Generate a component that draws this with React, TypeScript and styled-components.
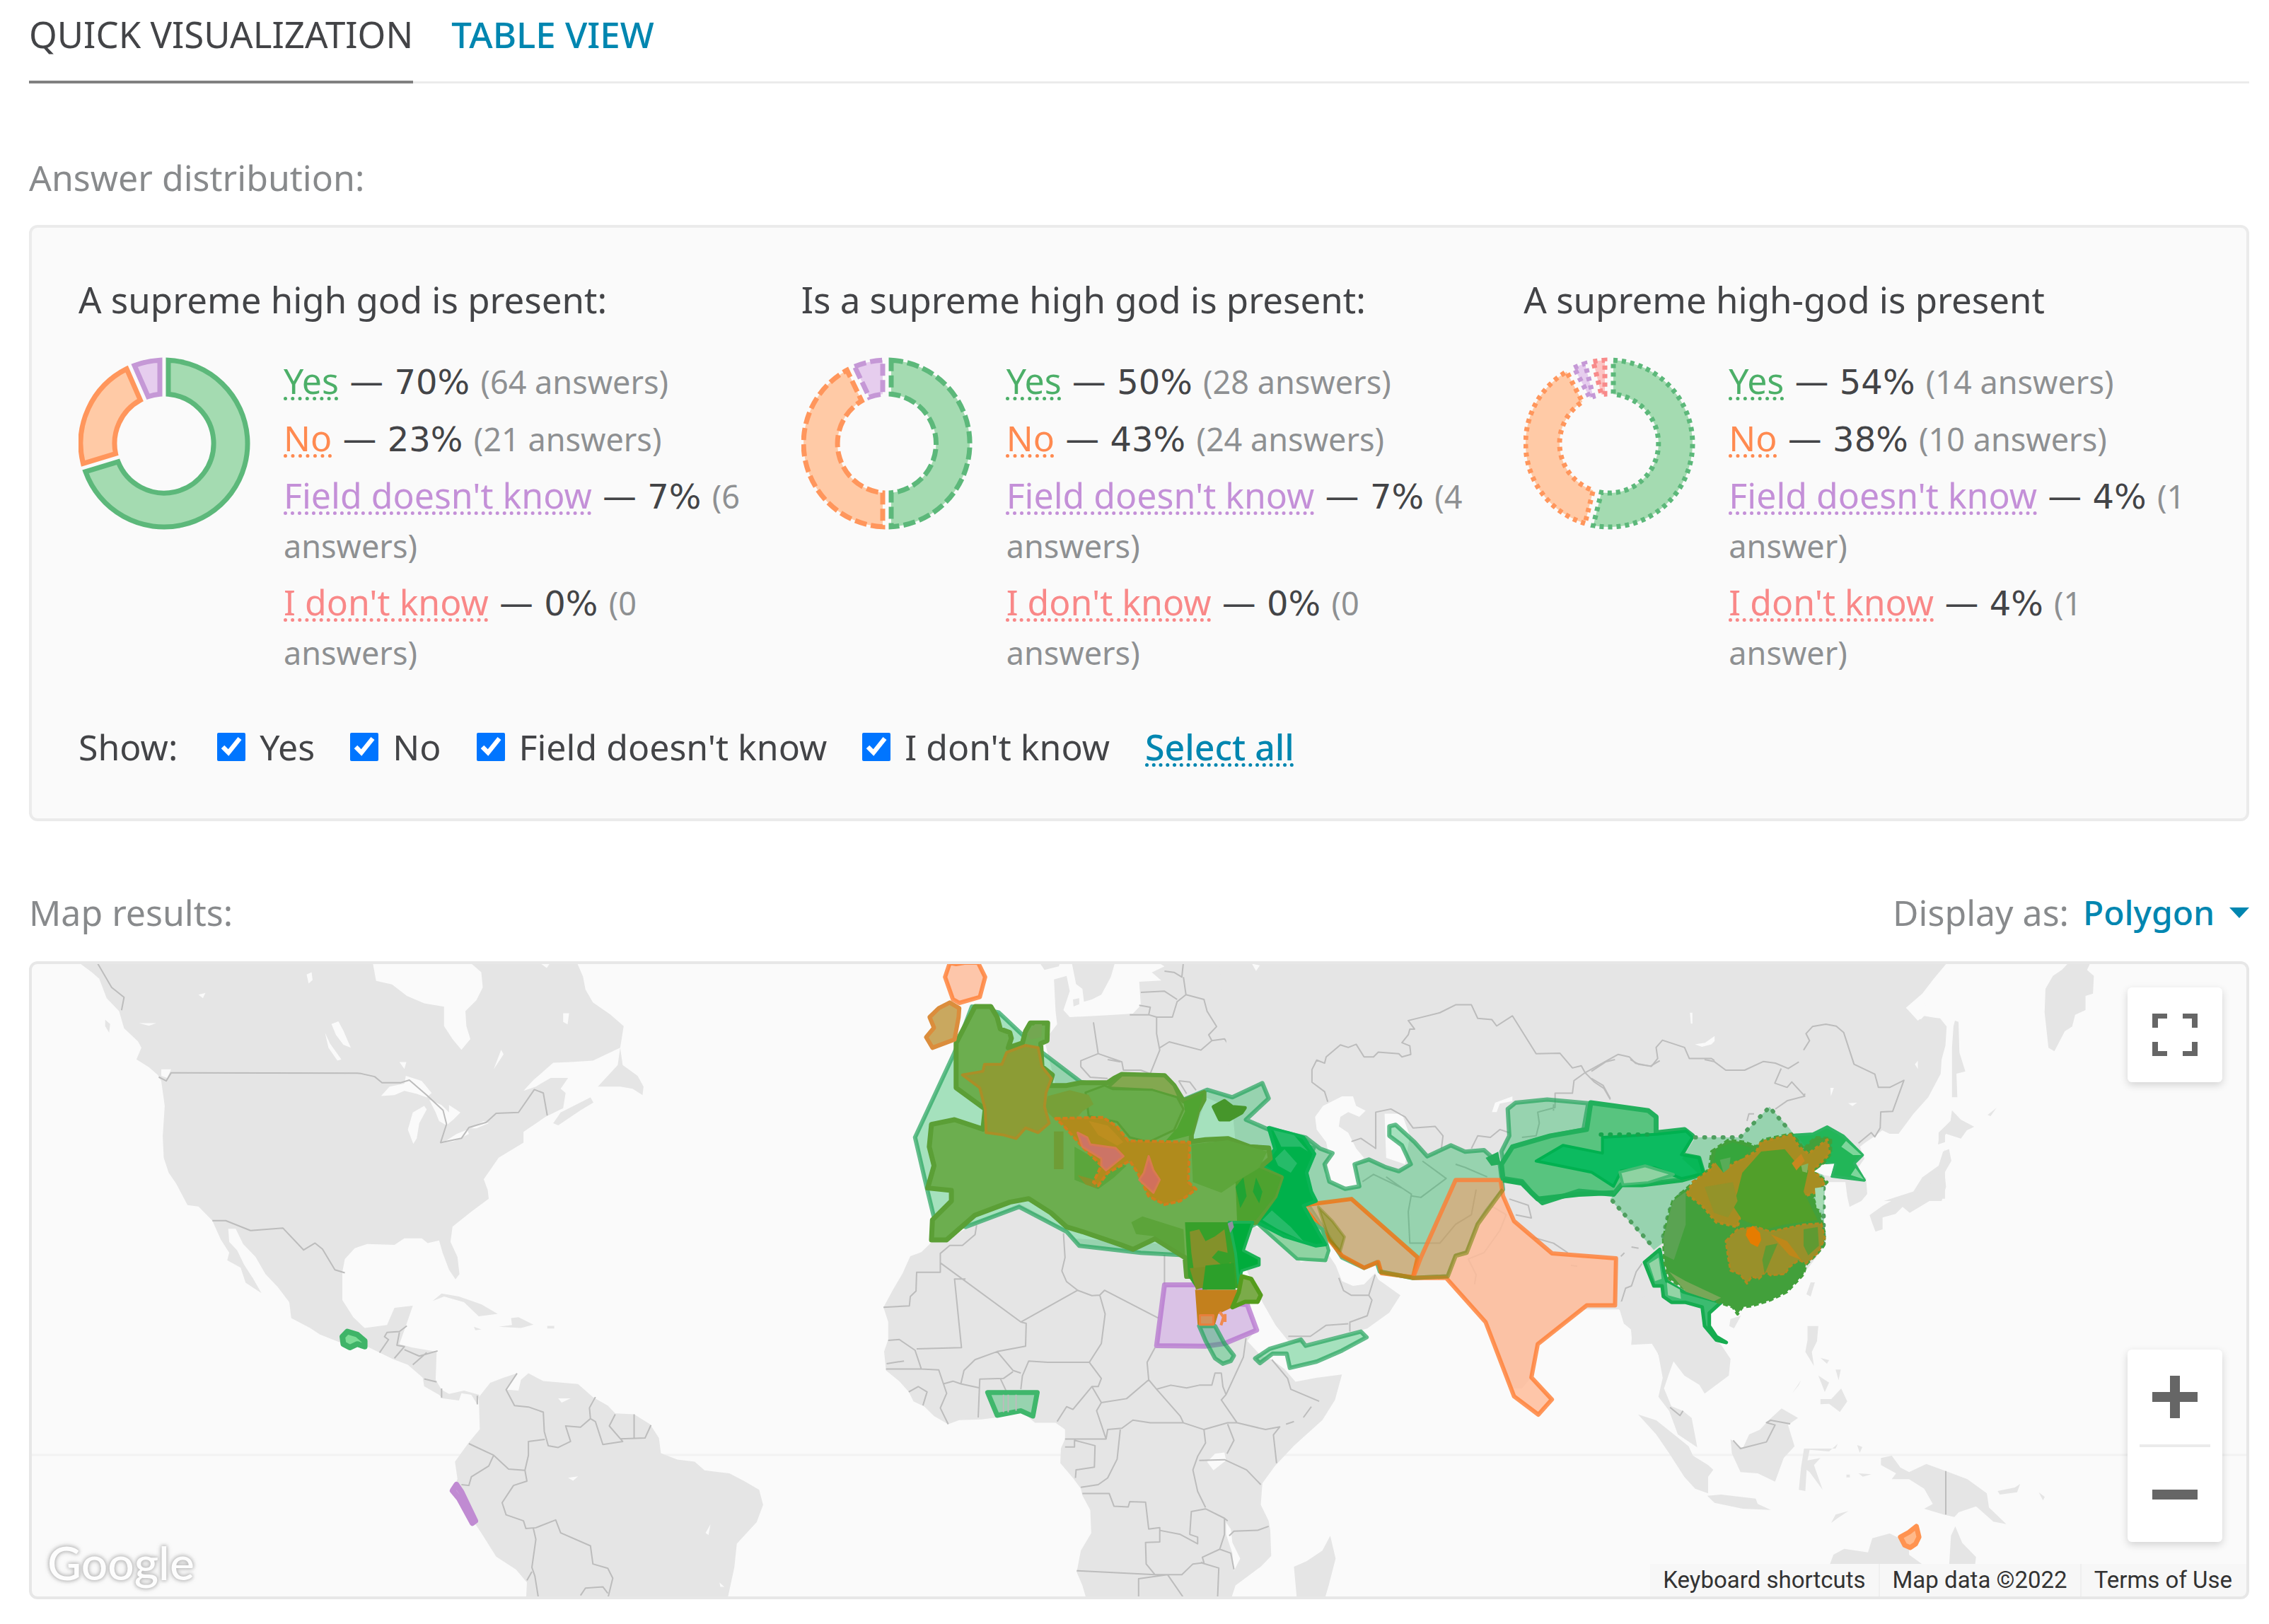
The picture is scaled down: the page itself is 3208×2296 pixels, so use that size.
import React, { useState } from "react";
import styled, { createGlobalStyle } from "styled-components";

const GlobalStyle = createGlobalStyle`
  *, *::before, *::after { box-sizing: border-box; }
  body {
    margin: 0;
    background: #fff;
    color: #434447;
    font-family: "Noto Sans", "Open Sans", sans-serif;
    font-size: 50px;
    line-height: 70px;
  }
`;

const Page = styled.main`
  padding: 0 28px 34px 41px;
`;

const Tabs = styled.nav`
  display: flex;
  gap: 54px;
  border-bottom: 3px solid #ebebeb;
`;

const Tab = styled.a<{ $active?: boolean }>`
  padding: 13px 0 31px;
  margin-bottom: -3px;
  font-size: 51px;
  text-decoration: none;
  font-weight: ${(p) => (p.$active ? 400 : 500)};
  color: ${(p) => (p.$active ? "#434447" : "#0086b0")};
  border-bottom: 4px solid ${(p) => (p.$active ? "#808080" : "transparent")};
`;

const SectionHead = styled.div<{ $above: number; $below: number }>`
  display: flex;
  justify-content: space-between;
  margin: ${(p) => p.$above}px 0 ${(p) => p.$below}px;
  color: #888a8c;
`;

const SectionTitle = styled.h2`
  margin: 0;
  font: inherit;
`;

const Panel = styled.section`
  border: 4px solid #ebebeb;
  border-radius: 12px;
  background: #fafafa;
  padding: 66px 0 66px 66px;
`;

const Charts = styled.div`
  display: grid;
  grid-template-columns: repeat(3, 1fr);
`;

const Chart = styled.article`
  padding-right: 66px;
`;

const ChartTitle = styled.h3`
  margin: 0 0 45px;
  font-size: 51px;
  font-weight: 400;
`;

const ChartBody = styled.div`
  display: flex;
  align-items: flex-start;
  gap: 46px;
`;

const Donut = styled.svg`
  flex: none;
  width: 244px;
  height: 244px;
  margin-top: 2px;
`;

const Legend = styled.ul`
  flex: 1;
  list-style: none;
  margin: 0;
  padding: 0;
  display: grid;
  gap: 11px;
`;

const DottedLink = styled.a<{ $color: string }>`
  color: ${(p) => p.$color};
  text-decoration: underline dotted 5px;
  text-underline-offset: 4px;
  text-decoration-skip-ink: none;
`;

const Share = styled.span`
  font-family: "DejaVu Sans", sans-serif;
  font-size: 48px;
  line-height: 1;
`;

const Count = styled.span`
  font-size: 45px;
  line-height: 1;
  color: #8e9092;
`;

const Filters = styled.div`
  display: flex;
  align-items: center;
  gap: 50px;
  margin-top: 65px;
`;

const FiltersTitle = styled.span`
  padding-right: 6px;
`;

const Option = styled.label`
  display: flex;
  align-items: center;
  gap: 20px;
`;

const Tick = styled.input`
  width: 40px;
  height: 40px;
  margin: 0;
  accent-color: #0075ff;
`;

const TextButton = styled.button`
  padding: 0;
  border: 0;
  background: none;
  font: inherit;
  font-weight: 500;
  color: #0086b0;
  text-decoration: underline dotted 5px;
  text-underline-offset: 4px;
  text-decoration-skip-ink: none;
`;

const Display = styled.div`
  display: flex;
  align-items: center;
  gap: 20px;
`;

const DisplaySelect = styled.select`
  appearance: none;
  border: 0;
  padding: 0;
  background: none;
  font: inherit;
  font-size: 48px;
  font-weight: 500;
  color: #0086b0;
`;

const Caret = styled.svg`
  width: 28px;
  height: 15px;
  fill: #0086b0;
`;

const MapFrame = styled.section`
  position: relative;
  height: 902px;
  border: 4px solid #e7e7e7;
  border-radius: 12px;
  background: #fafafa;
  overflow: hidden;
`;

const MapDrawing = styled.svg`
  display: block;
  width: 100%;
  height: 100%;

  path { vector-effect: non-scaling-stroke; stroke-linejoin: round; }
  .land { fill: #e5e5e5; }
  .sea { fill: #fafafa; }
  .border { fill: none; stroke: #bcbcbc; stroke-width: 2; }
`;

const Controls = styled.div`
  position: absolute;
  inset: 33px 34px 77px auto;
  display: flex;
  flex-direction: column;
  justify-content: space-between;
`;

const ControlCard = styled.div`
  width: 134px;
  background: #fff;
  border-radius: 6px;
  box-shadow: 0 4px 12px rgba(0, 0, 0, 0.16);
  display: flex;
  flex-direction: column;
  align-items: center;
`;

const ControlButton = styled.button`
  display: grid;
  place-items: center;
  width: 100%;
  height: 134px;
  padding: 0;
  border: 0;
  background: none;
  color: #666;

  svg { width: 64px; height: 64px; fill: currentColor; }
`;

const ControlRule = styled.hr`
  width: 100px;
  height: 4px;
  margin: 0;
  border: 0;
  background: #ebebeb;
`;

const Logo = styled.span`
  position: absolute;
  left: 22px;
  bottom: 12px;
  font: 500 66px/72px Lato, sans-serif;
  color: #fdfdfd;
  text-shadow: 0 0 5px #bbb, 0 0 5px #c4c4c4, 0 0 8px #ccc;
`;

const Attribution = styled.div`
  position: absolute;
  right: 0;
  bottom: 0;
  display: flex;
  font: 33px/46px Roboto, sans-serif;
  color: #333;
`;

const Credit = styled.span`
  padding: 0 18px;
  background: rgba(245, 245, 245, 0.75);
  border-left: 2px solid #efefef;
`;

const CreditButton = styled.button`
  padding: 0 18px;
  border: 0;
  background: rgba(245, 245, 245, 0.75);
  font: inherit;
  color: inherit;
`;

const CreditLink = styled.a`
  padding: 0 20px 0 18px;
  background: rgba(245, 245, 245, 0.75);
  border-left: 2px solid #efefef;
  color: inherit;
  text-decoration: none;
`;

const KINDS = [
  { label: "Yes", text: "#4caf68", stroke: "#5cb87a", fill: "#a4dbb1" },
  { label: "No", text: "#ff8a50", stroke: "#ff965c", fill: "#ffcaa6" },
  { label: "Field doesn't know", text: "#c490d8", stroke: "#c598d6", fill: "#e6cdee" },
  { label: "I don't know", text: "#f98888", stroke: "#f88a8a", fill: "#fcc4c4" },
];

const CHARTS = [
  { title: "A supreme high god is present:", dash: undefined, percents: [70, 23, 7, 0], counts: [64, 21, 6, 0] },
  { title: "Is a supreme high god is present:", dash: "17 6", percents: [50, 43, 7, 0], counts: [28, 24, 4, 0] },
  { title: "A supreme high-god is present", dash: "6 6", percents: [54, 38, 4, 4], counts: [14, 10, 1, 1] },
];

const OUTER = 118;
const INNER = 70;
const GAP = 6;

function slicePath(from: number, to: number) {
  const a = from * 2 * Math.PI;
  const b = to * 2 * Math.PI;
  const at = (r: number, angle: number) =>
    `${(121 + r * Math.sin(angle)).toFixed(1)} ${(122 - r * Math.cos(angle)).toFixed(1)}`;
  const o = Math.asin(GAP / OUTER);
  const i = Math.asin(GAP / INNER);
  const large = to - from > 0.5 ? 1 : 0;
  return `M${at(OUTER, a + o)} A${OUTER} ${OUTER} 0 ${large} 1 ${at(OUTER, b - o)} L${at(INNER, b - i)} A${INNER} ${INNER} 0 ${large} 0 ${at(INNER, a + i)}Z`;
}

function DonutChart({ counts, dash }: { counts: number[]; dash?: string }) {
  const total = counts.reduce((sum, n) => sum + n, 0);
  let start = 0;
  return (
    <Donut viewBox="0 0 244 244" aria-hidden="true">
      {counts.map((n, k) => {
        const from = start;
        start += n / total;
        return n ? (
          <path
            key={k}
            d={slicePath(from, start)}
            fill={KINDS[k].fill}
            stroke={KINDS[k].stroke}
            strokeWidth={7}
            strokeDasharray={dash}
          />
        ) : null;
      })}
    </Donut>
  );
}

/* The map is drawn in sheets; each sheet has its own grid laid on the world. */
const SHEET = {
  america: "translate(0 1340) scale(.7015 .6097)",
  europe: "translate(1200 1340) scale(.4464 .3333)",
  africa: "translate(1200 1700) scale(.4464 .3801)",
  asia: "translate(1750 1340) scale(.4464)",
  china: "translate(2250 1500) scale(.3333)",
  islands: "translate(2250 1850) scale(.611 .3333)",
  pacific: "translate(2550 1200) scale(.4196 .3333)",
};

const GREEN = { fill: "rgba(0,176,70,.34)", stroke: "rgba(40,165,95,.72)", strokeWidth: 6 };
const ORANGE = { fill: "rgba(255,150,95,.52)", stroke: "rgba(255,125,50,.8)", strokeWidth: 6 };
const PURPLE = { fill: "rgba(205,150,230,.45)", stroke: "rgba(180,115,205,.75)", strokeWidth: 7 };

function BaseMap() {
  return (
    <>
      <path d="M0 2059H3208" stroke="#f2f2f2" strokeWidth={3} />
      <g transform={SHEET.america}>
        <path className="land" d="M150 30L185 60 200 75 215 120 240 150 250 190 278 220 285 235 275 262 300 280 318 298 325 312 332 370 328 440 330 490 340 525 355 550 378 600 400 603 428 636 445 680 462 710 458 728 485 745 495 780 527 804 510 770 492 738 478 705 462 685 460 655 475 655 490 690 515 720 535 760 560 790 583 825 587 862 625 885 645 900 700 925 740 928 765 942 792 957 822 970 852 1000 855 1020 885 1040 892 1048 925 1053 930 1036 950 1040 962 1062 966 1040 935 1030 905 1038 890 1028 878 1005 880 940 830 930 805 922 818 880 832 833 795 838 780 878 735 885 712 860 690 820 690 755 695 725 715 700 740 690 795 692 815 677 850 677 862 688 885 682 892 710 905 750 918 772 926 760 922 720 908 685 912 650 950 615 985 585 983 565 975 540 1005 490 1055 455 1055 430 1100 395 1135 375 1140 340 1130 330 1145 305 1110 305 1080 325 1055 335 1075 310 1115 270 1150 268 1195 265 1250 235 1257 185 1230 158 1195 130 1180 100 1175 70 1160 30Z" />
        <path className="land" d="M1115 410L1130 385 1190 350 1196 362 1170 380 1125 415ZM1250 235L1245 275 1225 300 1205 325 1250 325 1275 330 1295 345 1297 325 1285 300 1255 275ZM872 822L890 805 925 812 970 830 1003 852 965 858 935 825 895 812ZM1030 862L1045 860 1075 877 1050 885 1005 882 1032 878ZM955 882L970 888 958 890ZM1103 880h14v6h-14ZM212 170L222 180 220 200 212 185Z" />
        <path className="sea" d="M750 30L758 80 790 88 820 115 855 132 895 140 895 185 912 215 930 240 948 215 940 185 938 150 960 125 973 95 970 60 940 30ZM768 347L785 325 815 318 818 300 850 312 870 340 860 350 840 342 815 335 795 345ZM833 458L822 425 832 385 855 370 860 378 845 410 840 445ZM865 355L890 368 905 385 905 368 928 385 915 400 900 415 885 405 878 385ZM893 455L920 435 942 425 945 435 915 452ZM950 422L975 405 985 410 960 422ZM668 180L682 174 692 195 707 235 692 228 677 205ZM655 200L665 225 688 262 680 265 662 235ZM805 268h14l-4 16ZM1135 155h12l-3 26-9-6ZM618 65l10-5 2 18-8 8ZM400 112l14-4-5 12ZM280 178l35 0-15 6ZM1010 240l5 10-20 35ZM1085 36l25 0-8 14ZM178 55l10 15-2 30-8-20ZM325 285l20 0-8 20-12-5Z" />
        <path className="border" d="M195 36L225 95 250 118 245 148M320 303L335 312 345 293 720 294 728 295 755 302 770 316 808 316 825 310 860 345 893 380 900 412 888 455 930 445 945 420 980 408 1000 387 1045 385 1077 332 1095 340 1103 392M428 636L455 636 505 659 570 653 612 704 635 688 650 702 675 750 695 757M820 880L805 893 780 895 775 905 783 912 765 942M805 895L800 925 815 928 795 955M815 935L845 950 882 938M832 970L860 942M855 1003L880 1010M890 1025v22M962 1042v20" />
        <path className="land" d="M965 1045L988 1012 1015 1000 1042 990 1022 1028 1045 1030 1050 1005 1065 990 1095 1008 1165 1015 1195 1045 1225 1065 1240 1083 1278 1085 1310 1108 1328 1140 1332 1175 1365 1190 1400 1195 1420 1215 1470 1222 1500 1240 1530 1260 1538 1295 1525 1335 1485 1385 1480 1440 1465 1520H1060L1062 1475 1040 1445 1000 1415 970 1360 935 1300 915 1255 922 1235 917 1195 945 1150 967 1120Z" />
        <path className="sea" d="M1125 1048l25 0-18 10ZM1145 1232l20-3-10 10ZM1422 1360l10-20-4 25ZM1450 1475l10 10-8 0Z" />
        <path className="border" d="M1042 990L1020 1028 1037 1065 1065 1068 1095 1080 1097 1125 1105 1158 1125 1162 1150 1148 1140 1112 1170 1115 1190 1095 1188 1070 1200 1045M1190 1095L1200 1102 1215 1155 1255 1148 1228 1112 1240 1085M1250 1142L1300 1140 1312 1110M1278 1085v55M945 1153L995 1180 1025 1212 1058 1215 1065 1180 1065 1148 1098 1143M995 1180L985 1205 950 1230 945 1250 930 1248M1058 1215L1062 1240 1035 1250 1012 1290 1020 1318 1055 1332 1060 1350 1080 1348 1120 1330 1130 1360 1190 1390 1195 1432 1225 1442 1235 1465 1225 1512M1075 1350L1080 1375 1072 1440 1078 1460 1085 1510M1062 1470L1072 1450M1170 1505L1180 1488 1215 1485 1225 1500" />
      </g>
      <g transform={SHEET.africa}>
        <path className="land" d="M265 150L230 190 195 205 170 270 140 330 110 395 125 450 125 515 112 560 118 630 160 670 190 710 205 745 240 765 270 800 315 830 350 815 420 812 470 805 545 780 590 825 655 825 685 850 685 885 672 920 670 975 710 1030 735 1070 740 1095 765 1150 768 1235 735 1300 722 1380 740 1430 755 1490H1208L1225 1430 1305 1360 1338 1320 1335 1225 1330 1190 1305 1130 1310 1050 1350 985 1410 910 1500 815 1540 740 1562 645 1480 658 1415 672 1380 625 1340 590 1305 575 1262 520 1290 480 1255 390 1240 250 1240 190 1000 160 720 140 620 60 540 10 400 80 320 140ZM1525 1245L1542 1330 1520 1430 1505 1490H1420L1410 1360 1450 1340 1500 1300Z" />
        <path className="sea" d="M1160 940L1190 935 1195 965 1155 1002 1135 970ZM1195 1195L1210 1220 1215 1270 1240 1330 1220 1375 1215 1310 1195 1240Z" />
        <path className="border" d="M405 90L400 125 360 165 320 165 290 195 290 265 215 265 213 335 195 355 192 390 110 395M290 230L545 450 725 332 690 300 675 260 685 210 680 120M545 450L562 455 560 540 470 560 400 590 365 630 355 680 330 670 300 680 285 628 230 625 210 555 160 515 125 518M370 290L335 290 357 545 215 550M725 332L770 352 795 350 810 332 980 435M1000 200V310M795 350L812 420 800 530 762 600 690 600 630 600 570 595 550 650 545 700M470 560L520 630 545 640M520 635L490 660 415 662 410 805M480 660L500 710M355 680L415 695M300 680L310 715 290 770 315 830M120 605L175 595M118 625L230 625M190 710L220 690 248 710 235 760M762 600L800 660 790 690 770 690 710 775 690 765 660 820M770 690L800 750 785 780 815 885 685 885M800 750L880 735 950 665 945 600 970 545M950 665L975 700 1050 800 1060 825 955 825 900 815 865 845 820 850 815 885M975 700L1020 685 1070 695 1110 685 1150 685 1160 640 1180 640 1185 690 1195 720M1258 510L1250 580 1195 720 1180 740 1230 825 1200 825 1125 850 1060 825M1340 590L1390 660 1400 700 1490 745M1465 765L1440 805M1410 820L1385 830M1230 825L1320 850 1365 840 1345 870 1355 975M1200 830L1220 890 1198 940M1125 850L1130 900 1105 950 1090 1000 1105 1080 1130 1140M1110 965L1190 962 1260 1000 1305 1055M685 915H715V890L780 910 778 990 720 1000 718 1030M860 850L850 960 820 1030 790 1055 735 1065M740 1088L825 1088 840 1135 885 1138 890 1118 940 1120 950 1220 985 1215 985 1268 940 1270 942 1350 970 1390 722 1375M985 1225L1050 1240 1105 1275 1105 1250 1080 1240 1085 1155 1130 1145 1190 1180 1200 1190M1190 1180L1190 1240 1175 1295 1120 1325 1125 1345 1090 1350 1055 1390 970 1390M1205 1245L1220 1228 1295 1225 1330 1210M1175 1295L1210 1310 1220 1370M1115 1345L1172 1365 1168 1480M918 1480V1405L1010 1390 1060 1475" />
      </g>
      <g transform={SHEET.europe}>
        <path className="land" d="M660 330L655 275 650 140 690 125 700 190 680 270 700 300 780 295 840 290 900 285 925 250 920 150 990 145 960 110 1000 85 970 60H1580V900L1500 840 1400 780 1300 780 1200 740 1130 830H700L620 400ZM600 60L620 100 665 85 672 60ZM705 60L720 160 740 180 745 235 770 225 800 205 830 130 845 60ZM710 225l20-5 0 25-18 10Z" />
        <path className="sea" d="M1085 830L1120 690 1130 640 1200 680 1260 720 1340 800 1340 840 1280 840 1190 810ZM1280 75l15 0 8 15-15 8ZM1480 720L1500 690 1568 640V870L1520 840 1490 800Z" />
        <path className="border" d="M1000 105L1030 110 1055 130 1060 66M1060 130L1068 205 1125 225 1135 275 1165 340 1140 375 1150 400 1190 392 1230 470 1290 480 1325 515 1320 590M1068 205L1040 235 1025 300 975 300 975 370 985 440 955 540 925 525 870 525 865 490 790 455 735 485 735 510 765 555 820 560M925 195L1000 190 1040 225M920 250L955 258 950 290 975 300M890 290H950M775 322L790 455M985 430L1015 405 1115 440 1150 400M1045 570L1080 575 1100 610M1568 415L1520 465 1510 495 1475 490 1465 555 1500 600 1525 660M820 480L860 490M1045 570L1070 625" />
      </g>
      <g transform={SHEET.asia}>
        <path className="land" d="M-60 40H1580V1130L1490 1140 1480 1200 1520 1290 1480 1300 1420 1320 1390 1310 1340 1320 1320 1250 1250 1262 1245 1210 1215 1150 1200 1140H1105L950 1262 930 1365 900 1400 870 1400 790 1190 660 1050H550L450 1040 440 1005 400 1020 335 990 300 950 0 700Z" />
        <path className="land" d="M20 880L80 895 150 950 200 1000 290 980 310 1010 330 1060 365 1075 400 1070 435 1035 445 1055 515 1105 480 1160 410 1210 355 1225 210 1260 160 1250 120 1200 80 1130 20 1010Z" />
        <path className="sea" d="M245 540L270 505 330 475 365 475 375 505 405 520 385 540 350 525 325 540 320 570 350 590 375 640 400 670 370 690 385 760 340 770 290 745 275 720 290 670 280 620 250 580ZM805 525L815 495 870 475 870 490 830 498 820 525ZM1448 310L1480 305 1530 270 1560 210 1568 190V220L1540 270 1500 310 1470 318ZM465 530L520 530 545 600 530 690 470 670ZM45 55l25 5-12 18ZM1432 210h8v35h-5Z" />
        <path className="border" d="M285 492L275 460 235 430 235 390 250 360 275 370 280 350 325 312 350 320 375 310 400 350 430 350 445 335 510 340 520 350 548 342 545 315 520 305 540 280 545 262 560 262 540 235 640 210 690 185 740 185 760 228 805 232 820 252 870 220 945 340 1020 338 1060 385 1088 378 1100 400 1065 425 1060 465 1005 465V510L950 525 955 560 945 600 900 605M1100 400L1205 342 1240 350 1260 370 1310 380 1330 355 1325 320 1345 297 1415 320 1430 355 1500 355 1568 400M1100 400L1130 430 1160 450 1180 485M360 618L390 608 430 635 437 640 437 525 485 515 530 540 555 575 625 570 650 600 645 640M1000 500V520M740 640L760 600 800 605 830 580 860 590M395 745L430 722 520 765 550 785 540 840 545 940 640 940 690 880 740 850 755 770M470 730L520 765M585 680L660 735 580 795 550 790M690 690L720 700 790 730M800 820L850 850 830 900 780 970 730 990 755 1040 750 1070M860 800L920 820 930 860 880 850M930 920L1000 940 1045 970M1130 990L1120 1040 1135 1060 1130 1130M1055 1010L1120 1020 1190 1030M1130 1000L1190 1000M1290 955L1250 1040 1220 1100 1210 1150M320 1050L335 1090 360 1105 415 1105 435 1040M415 1105L425 1120 410 1170 355 1190 355 1220M160 1235L230 1235 280 1200 350 1195" />
      </g>
      <g transform={SHEET.pacific}>
        <path className="land" d="M-300 480H490L440 555 400 620 345 680 385 735 405 715 440 722 460 725 482 760 478 840 465 900 462 960 420 1060 370 1130 320 1215 290 1215 265 1200 240 1225 205 1255 190 1270 205 1320 150 1420H-300ZM900 480L870 520 840 545 815 600 812 700 825 850 845 865 880 780 905 760 915 710 950 690 950 630 975 620 978 545 955 520 970 480ZM510 735L505 760 500 850 500 1060 518 1060 515 960 545 950 525 870 522 740ZM500 1115L495 1160 455 1210 455 1260 480 1215 530 1235 550 1200 575 1185 530 1155ZM470 1290L490 1280 498 1330 475 1380 480 1440 465 1500H270L370 1460 400 1400 455 1350ZM620 1135L650 1105 630 1140Z" />
        <path className="sea" d="M345 680l60-20 20 30-30 40ZM150 1085l30-2-15 14ZM90 1020l12 0-10 35ZM375 920l10-15 0 35Z" />
        <path className="border" d="M0 860L20 820 8 790 30 760 75 750 110 758 135 785 170 920 240 962 252 1018 290 1018 338 988 300 1120 260 1122 258 1190 240 1228 228 1210 185 1255M0 1055L5 1045" />
      </g>
      <g transform={SHEET.china}>
        <path className="land" d="M-60 300H1000V500L985 600 990 790 900 910 800 1000 640 1050 500 1030 400 1060H-60ZM1075 500H1165L1170 570 1145 600 1095 625 1085 580ZM1500 300L1475 330 1470 360 1500 350ZM1500 380L1490 420 1470 470 1475 510 1410 540 1365 580 1290 590 1235 620 1180 660 1190 690 1205 730 1235 720 1235 670 1290 655 1320 625 1350 650 1400 620 1450 590 1500 590ZM930 945L948 945 930 1005 912 995ZM590 1100L635 1085 605 1140 585 1130Z" />
        <path className="border" d="M0 50L60 10 100 0M0 80L50 110 80 165M165 0L200 20 250 28 290 5M480 0L520 8 570 45 650 45 730 8 780 15 835 38 880 10M805 38L778 100 830 118 850 95 905 155 830 175 780 210M660 260L668 230 690 230M340 1070L345 1095 365 1110 368 1160 400 1140 450 1150 495 1240 490 1255 430 1255 400 1285 415 1340M495 1250H550V1310L500 1345M345 1080L260 1120 265 1160 290 1200 285 1245 310 1290 320 1345M215 865L190 900 170 960 145 970 120 1050M125 835L140 820M170 795L200 800" />
      </g>
      <g transform={SHEET.islands}>
        <path className="land" d="M60 -20L75 70 95 100 92 160 140 155 155 200 165 300 155 380 180 440 200 540 245 595 232 470 212 440 185 420 168 345 180 280 190 230 215 290 250 330 262 367 318 290 322 220 300 160 262 100 265 20 280 -100ZM108 455L150 480 225 590 235 630 270 670 282 690 270 720 270 790 240 770 215 720 180 620 150 540ZM268 800L300 795 380 812 385 835 415 860 350 855 285 830ZM322 560L350 600 365 540 390 520 410 480 440 430 478 470 455 500 470 590 445 640 425 740 385 705 345 700 325 620ZM492 600L565 600 570 580 550 612 505 605 500 650 530 640 515 670 535 775 505 700 498 690 495 780 480 775 485 680ZM500 80H525L522 145 510 190 515 250 495 190 500 140ZM530 215L550 225 545 240ZM565 265h12l-5 45ZM525 290L550 320 540 360ZM530 390L555 390 578 345 592 400 575 445 550 410 530 412ZM485 310L465 365 480 330ZM670 640L695 630 715 680 735 700 775 665 820 695 870 730 915 790 920 850 960 920 930 910 890 845 850 870 840 890 815 880 770 855 790 835 770 770 735 730 695 730 705 705 670 670ZM940 780L980 765 992 750 985 785 945 795ZM1035 785l14 20-4 15ZM615 585l12 8-6 25ZM590 710h8v12h-8ZM618 705l30 4-20 10ZM555 915L565 880 595 865 570 895ZM485 890l10 15M445 870l8 8ZM552 1090L560 1050 585 1025 640 1040 650 980 690 960 735 1000 735 1050 765 1090ZM828 1090L832 970 842 930 858 1000 890 1060 888 1090Z" />
        <path className="border" d="M328 565L345 600 405 572 425 500 405 490 415 480 460 495M820 695V880M182 425L205 460 212 440" />
      </g>
    </>
  );
}

function Overlays() {
  return (
    <>
      <g transform={SHEET.america}>
        <path d="M690 905L700 893 720 900 735 915 735 928 720 922 705 930 692 922Z" fill="#7ddc96" stroke="#3fb468" strokeWidth={8} />
        <path d="M912 1262L920 1248 930 1265 958 1332 952 1337 925 1280Z" fill="#c99bda" stroke="#c08bd2" strokeWidth={8} />
      </g>
      <g transform={SHEET.europe}>
        <path {...GREEN} d="M390 255L475 280 550 375 612 450 735 575 1060 650 1135 608 1215 640 1310 580 1330 645 1258 735 1335 780 1400 860V1100L1270 1190 1240 1290 1060 1310 925 1300 730 1270 690 1210 540 1105 370 1190 270 1150 250 1040 210 810 335 450Z" />
        <path {...ORANGE} d="M320 70L340 75 380 66 410 70 432 130 415 215 350 240 330 225 305 130Z" />
      </g>
      <g transform={SHEET.africa}>
        <path {...PURPLE} d="M1000 312H1100L1180 380 1262 385 1292 480 1190 530 1130 540 975 538Z" />
        <path {...GREEN} d="M1110 465H1160L1190 530 1220 575 1210 595 1185 605 1160 585 1130 520Z" />
        <path {...GREEN} d="M440 712H597L583 800 545 780 470 797Z" stroke="#3fb76c" strokeWidth={7} />
        <path className="border" d="M490 720v65M505 720v65M530 720v60" />
      </g>
      <g transform={SHEET.asia}>
        <path {...GREEN} d="M55 1305L100 1275 200 1245 215 1265 390 1220 408 1238 330 1280 250 1315 165 1335 155 1290 110 1290 70 1320Z" />
        <path {...GREEN} d="M100 575L150 590 215 605 260 640 300 655 275 690 290 745 340 768 385 760 370 690 415 675 470 700 510 712 548 690 520 630 480 600 480 570 500 565 560 620 600 665 675 630 720 650 780 645 830 690 840 770 790 835 760 880 725 970 690 980 665 1045 555 1050 450 1030 440 1000 400 1018 330 985 220 815 215 700 240 640Z" />
        <path {...ORANGE} d="M205 820L360 800 570 985 555 1048 455 1035 445 1000 400 1018 330 980 290 930Z" stroke="rgba(240,115,15,.8)" />
        <path fill="rgba(255,250,248,.65)" d="M840 770L875 870 995 972 1198 988 1195 1137H1105L950 1260 930 1365 995 1435 952 1483 875 1425 785 1190 665 1050 690 980 725 970 760 880Z" />
        <path {...ORANGE} d="M690 740H832L840 790 875 870 995 972 1198 988 1195 1137H1105L950 1260 930 1365 995 1435 952 1483 875 1425 785 1190 660 1050H555L580 985Z" />
        <path d="M255 825L300 870 338 920 325 965 290 930Z" fill="rgba(120,135,10,.45)" stroke="rgba(120,130,10,.4)" strokeWidth={4} />
        <path d="M840 770L760 880 725 970 690 980 665 1045 555 1050 450 1030" fill="none" stroke="rgba(140,140,30,.6)" strokeWidth={6} />
      </g>
      <g transform={SHEET.europe}>
        <path d="M1290 1170L1420 1325 1510 1332 1520 1290 1500 1200 1400 1100Z" fill="#8fd3a2" stroke="#4cb877" strokeWidth={5} />
        <path d="M1310 930L1350 860 1330 770 1390 790 1440 810 1475 880 1450 960 1465 1040 1480 1080 1440 1100 1510 1265 1480 1270 1380 1230 1285 1165 1350 1060 1370 980Z" fill="#00b14b" stroke="#0ab355" strokeWidth={5} />
        <path d="M1345 780L1410 800 1455 870 1430 850 1370 850ZM1340 1120L1400 1190 1440 1250 1360 1200 1310 1160ZM1350 900L1380 860 1420 920 1400 960 1360 930Z" fill="#26bb69" />
        <path d="M400 255H450L470 300 480 350 510 365 515 390 505 430 550 410 560 360 575 325 630 325 628 400 608 412 612 510 645 545 635 590 690 590 735 578H820L840 560 865 543 1000 548 1030 590 1060 655 1125 620 1125 650 1105 700 1085 800V828L1130 820 1200 815 1270 850 1330 855 1335 900 1300 940 1370 980 1350 1060 1290 1170 1240 1180 1230 1400H1070L1065 1320 970 1240 900 1285 860 1265 740 1210 690 1190 640 1130 570 1070 510 1085 400 1140 310 1245H262L265 1160 325 1080V1035L250 1025 270 930 255 850 262 755 335 735 425 775 432 690 340 600V410Z" fill="#6cae4f" stroke="#5b9f36" strokeWidth={7} />
        <path d="M820 600L865 545 1000 550 1030 590 1050 650 960 610Z" fill="#83a850" stroke="#5f9e38" strokeWidth={4} />
        <path d="M835 605L960 608 1040 640 1060 690 1030 780 950 830 890 810 850 745 760 720 750 620 810 590Z" fill="#68ac4a" stroke="#599f36" strokeWidth={3} />
        <path d="M1060 660L1125 620 1085 800 1000 830 1040 770 1065 700Z" fill="#50a431" />
        <path d="M630 635L700 610 760 630 775 670 740 700 720 730 650 730 620 690Z" fill="#77a038" />
        <path d="M360 545L425 530 430 500 485 500 500 450 560 420 600 430 612 510 642 560 625 620 620 680 635 750 600 790 560 770 530 815 490 800 435 790 432 690 415 600Z" fill="#8c9c35" stroke="#ab8e27" strokeWidth={4} />
        <path d="M650 785H680V945H650Z" fill="#6f9d36" />
        <path d="M715 850L780 900 880 930 840 980 790 1030 715 990Z" fill="#5ba63c" />
        <path d="M725 970L780 990 785 1025 750 1010Z" fill="#86932b" />
        <path d="M655 730L805 725 850 765 885 825 1080 830 1075 1000 1100 1030 1050 1080 1000 1095 950 1060 915 960 890 910 820 960 790 1015 775 1000 800 930 740 850 680 760Z" fill="#b08b1c" stroke="#cf7f1c" strokeWidth={4} strokeDasharray="7 3" />
        <path d="M760 740L820 760 870 830 850 845 790 800Z" fill="#bd8e1f" />
        <path d="M725 790L755 810 765 840 845 855 870 890 815 950 800 930 800 900 740 850Z" fill="#cc7466" stroke="#d97a50" strokeWidth={3} />
        <path d="M950 890L965 950 985 990 965 1045 920 990 935 960Z" fill="#d1705c" stroke="#d97a50" strokeWidth={3} />
        <path d="M1085 840L1200 822 1325 870 1300 940 1230 1000 1180 1045 1090 1000Z" fill="#5da63b" />
        <path d="M1225 1000L1300 940 1370 980 1350 1060 1290 1160 1230 1170Z" fill="#4ea22f" />
        <path d="M895 1170L930 1145 1060 1200 1065 1310 970 1230 910 1220Z" fill="#5ca43a" />
        <path d="M1155 680L1190 655 1215 680 1255 685 1245 705 1205 735 1175 735Z" fill="#46962b" stroke="#46962b" strokeWidth={5} />
        <path d="M285 262L320 238 350 262 348 300 335 395 265 430 245 385 270 345 256 300Z" fill="#c9a85f" stroke="#db8d3c" strokeWidth={6} />
        <path d="M590 330L612 330 610 385 575 395 565 370Z" fill="#73a751" />
        <path d="M1065 1170H1215L1235 1450H1100L1075 1400Z" fill="#37a02a" />
        <path d="M1080 1210L1110 1200 1130 1250 1160 1230 1190 1200 1200 1300 1170 1290 1150 1320 1180 1350 1130 1380 1120 1450 1100 1440 1085 1300ZM1150 1390L1210 1340 1215 1400 1190 1440Z" fill="#83912a" />
        <path d="M1225 1020L1250 980 1260 1060 1240 1110ZM1290 980L1310 1040 1300 1090 1280 1040Z" fill="#20a433" />
        <path d="M1205 1170L1280 1170 1250 1290 1300 1325 1300 1352 1245 1375 1235 1430 1225 1300Z" fill="#00ac3c" stroke="#1cb255" strokeWidth={4} />
        <path d="M1200 1175l15-10 5 25-12 25Z" fill="#8f8f9f" />
      </g>
      <g transform={SHEET.africa}>
        <path d="M1080 250L1100 330 1170 300 1180 240Z" fill="#7c8f25" />
        <path d="M1130 240L1220 230 1225 330 1120 330Z" fill="#2ca02a" />
        <path d="M1097 330H1230L1225 390 1170 420 1160 460H1105Z" fill="#c3801d" />
        <path d="M1112 425H1155V460H1112Z" fill="#d2935a" stroke="#e87f3c" strokeWidth={3} />
        <path d="M1175 412l12 20-8 30M1192 420v30" fill="none" stroke="#f08a50" strokeWidth={4} />
        <path d="M1245 280L1275 290 1305 350 1295 375 1255 375 1215 395 1235 340Z" fill="#7bab4a" stroke="#559c1d" strokeWidth={6} />
      </g>
      <g transform={SHEET.asia}>
        <path {...GREEN} d="M835 650L860 600 855 515 880 495 980 485 1110 497 1095 580 990 600 870 635 840 680Z" />
        <path d="M835 690L870 635 990 600 1105 580 1118 495 1300 520 1325 540V590L1415 580 1440 600 1405 660 1460 670 1475 720 1405 740 1280 755 1215 755 1190 785 1080 775 965 812 930 780 900 745 840 735Z" fill="#58c47f" stroke="#22b05c" strokeWidth={7} />
        <path d="M1155 605L1330 595 1420 585 1440 605 1405 660 1460 670 1475 720 1405 735 1320 700 1215 710 1190 760 1120 715 945 680 1030 630 1155 655Z" fill="#0cbb60" stroke="#00b150" strokeWidth={4} />
        <path d="M840 740L900 750 950 800 1080 785 1190 780" fill="none" stroke="#1cae57" strokeWidth={7} />
        <path d="M1210 715L1290 695 1380 722 1300 748 1220 755Z" fill="#8fd3a2" stroke="#45bb74" strokeWidth={4} />
        <path d="M785 670l40-20 8 40-30 5Z" fill="#25ae5c" />
      </g>
      <g transform={SHEET.china}>
        <path d="M80 592L130 535 380 510 450 480 385 420 440 330H630L755 200 840 292 990 500 985 800H400L300 780 265 808Z" fill="rgba(0,176,70,.34)" />
        <path d="M90 600L250 782M380 570L330 640 302 760M440 330H630L755 202 835 295M985 545V800" fill="none" stroke="#4f9f5f" strokeWidth={6} strokeLinecap="round" strokeDasharray="1 12" />
        <path d="M40 318H240" fill="none" stroke="#16a44c" strokeWidth={6} strokeLinecap="round" strokeDasharray="1 12" />
        <path d="M225 860L290 805 308 900 320 940 390 985 550 1030 500 1075 500 1130 530 1175 572 1200 530 1190 480 1130 470 1050 400 1030 340 1030 305 1005 300 960 265 960Z" fill="#3cbb70" stroke="#16ac50" strokeWidth={5} />
        <path d="M245 865L285 840 298 930 270 940ZM320 945L375 975 380 1015 325 1000Z" fill="#93d4a5" />
        <path d="M860 320L940 315 1000 285 1070 325 1150 405 1115 440 1158 512 1020 495 1035 445 950 430Z" fill="#22b658" stroke="#2cb462" strokeWidth={4} />
        <path d="M1060 370L1080 345 1145 405 1110 405ZM1100 490L1120 460 1155 508Z" fill="#7ed69b" />
        <path d="M510 390L580 342 650 350 700 370 730 340 850 315 880 350 900 380 950 330 1015 335 1015 400 985 440 945 475 1000 520 975 545 940 590 965 640 975 680 990 740 985 790 960 820 910 870 900 910 830 985 760 1020 680 1045 640 1050 620 1080 600 1050 540 1030 460 990 400 975 330 930 310 860 305 760 330 650 345 600 400 550 500 465Z" fill="#42a03b" stroke="#42a03b" strokeWidth={4} strokeDasharray="7 4" />
        <path d="M345 600L400 560 400 700 350 850 310 830 305 760Z" fill="#5aa352" />
        <path d="M405 570L430 520 500 470 530 430 560 470 620 430 700 390 720 350 850 318 880 370 920 400 1000 340 1010 400 940 470 990 520 960 560 900 580 880 540 800 560 700 620 640 620 620 710 530 690 470 620Z" fill="#a68d22" stroke="#b58a1e" strokeWidth={4} strokeDasharray="5 4" />
        <path d="M640 480L720 390 820 380 870 440 920 470 900 560 930 620 960 680 820 700 740 720 640 680 600 620 620 560Z" fill="#519f2a" />
        <path d="M480 540L600 520 620 600 580 670 520 650Z" fill="#939329" />
        <path d="M530 380L600 350 680 375 640 420 580 440 560 480 520 430Z" fill="#36a63c" />
        <path d="M545 425L590 415 585 460 560 480Z" fill="#58ac58" />
        <path d="M570 770L620 720 700 710 760 730 900 700 975 695 990 760 960 820 910 865 880 850 840 880 820 910 760 915 740 900 710 930 680 920 660 950 630 910 590 895 580 840Z" fill="#99902a" stroke="#b08820" strokeWidth={3} strokeDasharray="6 3" />
        <path d="M740 790L790 780 760 850 735 910 725 850ZM900 720L960 710 965 790 920 830 900 790Z" fill="#5f9a32" />
        <path d="M760 740L830 770 890 850 840 830Z" fill="#bf8719" />
        <path d="M660 720L685 705 715 735 720 765 705 795 675 780 655 745Z" fill="#e67c00" />
        <path d="M850 440L890 400 905 430 870 470Z" fill="#c8871f" />
        <path d="M890 450L920 440 915 480 895 475Z" fill="#85b35f" />
        <path d="M945 475L985 445 1030 442 1015 495 985 490Z" className="sea" />
        <path d="M948 545L985 540 982 640 955 630Z" fill="#a6dcb4" />
        <path d="M330 900L400 940 550 1010 520 1025 400 985Z" fill="#78a758" />
      </g>
      <g transform={SHEET.islands}>
        <path d="M752 930L758 975 750 1005 738 1020 725 1010 715 975 735 955Z" fill="#ffb98a" stroke="#ff9350" strokeWidth={7} />
      </g>
    </>
  );
}

export default function App() {
  const [shown, setShown] = useState<string[]>(KINDS.map((k) => k.label));
  const toggle = (label: string) =>
    setShown((list) => (list.includes(label) ? list.filter((l) => l !== label) : [...list, label]));

  return (
    <>
      <GlobalStyle />
      <Page>
        <Tabs>
          <Tab href="#visualization" $active>QUICK VISUALIZATION</Tab>
          <Tab href="#table">TABLE VIEW</Tab>
        </Tabs>

        <SectionHead $above={98} $below={32}>
          <SectionTitle>Answer distribution:</SectionTitle>
        </SectionHead>
        <Panel>
          <Charts>
            {CHARTS.map((chart) => (
              <Chart key={chart.title}>
                <ChartTitle>{chart.title}</ChartTitle>
                <ChartBody>
                  <DonutChart counts={chart.counts} dash={chart.dash} />
                  <Legend>
                    {KINDS.map((kind, k) => (
                      <li key={kind.label}>
                        <DottedLink href="#answers" $color={kind.text}>{kind.label}</DottedLink>
                        <Share>{` — ${chart.percents[k]}% `}</Share>
                        <Count>{`(${chart.counts[k]} ${chart.counts[k] === 1 ? "answer" : "answers"})`}</Count>
                      </li>
                    ))}
                  </Legend>
                </ChartBody>
              </Chart>
            ))}
          </Charts>
          <Filters>
            <FiltersTitle>Show:</FiltersTitle>
            {KINDS.map((kind) => (
              <Option key={kind.label}>
                <Tick type="checkbox" checked={shown.includes(kind.label)} onChange={() => toggle(kind.label)} />
                {kind.label}
              </Option>
            ))}
            <TextButton type="button" onClick={() => setShown(KINDS.map((k) => k.label))}>Select all</TextButton>
          </Filters>
        </Panel>

        <SectionHead $above={94} $below={34}>
          <SectionTitle>Map results:</SectionTitle>
          <Display>
            <label htmlFor="display-as">Display as:</label>
            <DisplaySelect id="display-as" defaultValue="Polygon">
              <option>Polygon</option>
              <option>Point</option>
            </DisplaySelect>
            <Caret viewBox="0 0 28 15" aria-hidden="true"><path d="M0 0H28L14 15Z" /></Caret>
          </Display>
        </SectionHead>
        <MapFrame>
          <MapDrawing viewBox="45 1365 3131 894" preserveAspectRatio="xMidYMid slice" role="img" aria-label="Map of answers">
            <BaseMap />
            <Overlays />
          </MapDrawing>
          <Logo>Google</Logo>
          <Controls>
            <ControlCard>
              <ControlButton type="button" aria-label="Toggle fullscreen">
                <svg viewBox="0 0 64 64">
                  <path d="M0 2H21V9H8V22H0ZM43 2H64V22H56V9H43ZM0 42H8V55H21V62H0ZM56 42H64V62H43V55H56Z" />
                </svg>
              </ControlButton>
            </ControlCard>
            <ControlCard>
              <ControlButton type="button" aria-label="Zoom in">
                <svg viewBox="0 0 64 64"><path d="M25 2H39V25H64V39H39V62H25V39H0V25H25Z" /></svg>
              </ControlButton>
              <ControlRule />
              <ControlButton type="button" aria-label="Zoom out">
                <svg viewBox="0 0 64 64"><path d="M0 25H64V39H0Z" /></svg>
              </ControlButton>
            </ControlCard>
          </Controls>
          <Attribution>
            <CreditButton type="button">Keyboard shortcuts</CreditButton>
            <Credit>Map data ©2022</Credit>
            <CreditLink href="#terms">Terms of Use</CreditLink>
          </Attribution>
        </MapFrame>
      </Page>
    </>
  );
}
